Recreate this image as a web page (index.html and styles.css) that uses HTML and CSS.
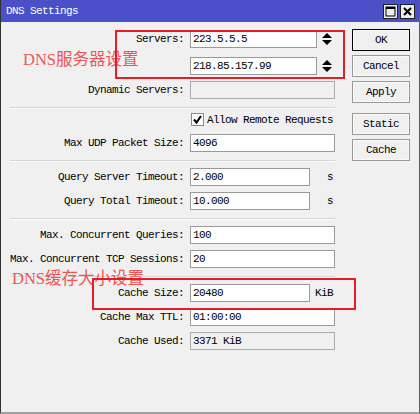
FILE: index.html
```html
<!DOCTYPE html>
<html>
<head>
<meta charset="utf-8">
<link rel="stylesheet" href="styles.css">
</head>
<body>
<div class="window">
  <div class="titlebar">
    <span class="title">DNS Settings</span>
    <div class="tb-btns">
      <span class="tb-btn"><svg width="13" height="13" viewBox="0 0 13 13"><rect x="2" y="2" width="9" height="9" fill="none" stroke="#000" stroke-width="1"/><rect x="2" y="2" width="9" height="2" fill="#000"/></svg></span>
      <span class="tb-btn"><svg width="13" height="13" viewBox="0 0 13 13"><path d="M3 3 L10 10 M10 3 L3 10" stroke="#000" stroke-width="2"/></svg></span>
    </div>
  </div>
  <div class="content">
    <div class="form">
      <div class="group">
        <div class="row"><span class="label">Servers:</span><span class="input w-srv">223.5.5.5</span><span class="spin"><svg width="10" height="14" viewBox="0 0 10 14"><polygon points="0,6 5,1 10,6" fill="#000"/><polygon points="0,8 5,13 10,8" fill="#000"/></svg></span></div>
        <div class="row r2"><span class="label"></span><span class="input w-srv">218.85.157.99</span><span class="spin"><svg width="10" height="14" viewBox="0 0 10 14"><polygon points="0,6 5,1 10,6" fill="#000"/><polygon points="0,8 5,13 10,8" fill="#000"/></svg></span></div>
        <div class="row"><span class="label">Dynamic Servers:</span><span class="input wide disabled"></span></div>
      </div>
      <div class="sep sep-first"></div>
      <div class="group">
        <div class="row cb-row"><span class="label"></span><span class="checkbox"><svg width="11" height="11" viewBox="0 0 11 11"><path d="M2 5.5 L4.5 8.5 L9 2" fill="none" stroke="#000" stroke-width="2"/></svg></span><span class="cb-label">Allow Remote Requests</span></div>
        <div class="row"><span class="label">Max UDP Packet Size:</span><span class="input wide">4096</span></div>
      </div>
      <div class="sep"></div>
      <div class="group">
        <div class="row"><span class="label">Query Server Timeout:</span><span class="input w-unit">2.000</span><span class="unit">s</span></div>
        <div class="row"><span class="label">Query Total Timeout:</span><span class="input w-unit">10.000</span><span class="unit">s</span></div>
      </div>
      <div class="sep"></div>
      <div class="group">
        <div class="row"><span class="label">Max. Concurrent Queries:</span><span class="input wide">100</span></div>
        <div class="row"><span class="label">Max. Concurrent TCP Sessions:</span><span class="input wide">20</span></div>
      </div>
      <div class="sep"></div>
      <div class="group">
        <div class="row"><span class="label">Cache Size:</span><span class="input w-unit">20480</span><span class="unit">KiB</span></div>
        <div class="row"><span class="label">Cache Max TTL:</span><span class="input wide">01:00:00</span></div>
        <div class="row"><span class="label">Cache Used:</span><span class="input wide disabled">3371 KiB</span></div>
      </div>
    </div>
    <div class="buttons">
      <span class="btn default">OK</span>
      <span class="btn">Cancel</span>
      <span class="btn">Apply</span>
      <span class="btn spaced">Static</span>
      <span class="btn">Cache</span>
    </div>
  </div>
  <div class="note note1">DNS服务器设置</div>
  <div class="note note2">DNS缓存大小设置</div>
  <div class="redbox box1"></div>
  <div class="redbox box2"></div>
</div>
</body>
</html>
```
FILE: styles.css
```css
html, body {
  margin: 0;
  padding: 0;
  background: #f0f0f0;
}
body {
  font-family: "Liberation Mono", "DejaVu Sans Mono", monospace;
  font-size: 11px;
  letter-spacing: -0.6px;
  color: #000;
}
.window {
  position: relative;
  width: 420px;
  height: 414px;
  box-sizing: border-box;
  background: #f0f0f0;
  border-left: 1px solid #303030;
  border-right: 1px solid #606060;
  border-bottom: 2px solid #a0a0a0;
}
.titlebar {
  height: 22px;
  background: #4b50c9;
  display: flex;
  align-items: center;
  padding-left: 5px;
  padding-right: 4px;
  box-sizing: border-box;
}
.title {
  color: #fff;
  line-height: 22px;
}
.tb-btns {
  margin-left: auto;
  display: flex;
  gap: 2px;
  margin-top: 1px;
}
.tb-btn {
  width: 15px;
  height: 15px;
  box-sizing: border-box;
  background: #ececec;
  border: 1px solid #202020;
  display: flex;
  align-items: center;
  justify-content: center;
}
.content {
  display: flex;
  padding-top: 7px;
}
.form {
  width: 344px;
  padding-top: 1px;
}
.group {
  display: flex;
  flex-direction: column;
  gap: 6px;
}
.row {
  display: flex;
  align-items: center;
  height: 18px;
}
.row.r2 {
  margin-top: 3px;
}
.row.cb-row {
  height: 17px;
}
.label {
  width: 183px;
  text-align: right;
  margin-right: 6px;
  flex: none;
  white-space: nowrap;
}
.input {
  height: 18px;
  box-sizing: border-box;
  border: 1px solid #9a9a9a;
  background: #fff;
  padding-left: 2px;
  line-height: 16px;
  flex: none;
  white-space: nowrap;
}
.input.wide { width: 145px; }
.input.w-srv { width: 127px; }
.input.w-unit { width: 120px; }
.input.disabled {
  background: #f0f0f0;
  border-color: #ababab;
}
.spin {
  display: flex;
  margin-left: 5px;
}
.unit {
  width: 23px;
  text-align: right;
}
.checkbox {
  width: 13px;
  height: 13px;
  box-sizing: border-box;
  border: 1px solid #8a8a8a;
  background: #fff;
  margin-left: 1px;
  display: flex;
  align-items: center;
  justify-content: center;
}
.cb-label {
  margin-left: 3px;
}
.sep {
  margin: 8px 0 6px 9px;
  width: 325px;
  height: 1px;
  background: #d6d6d6;
  border-bottom: 1px solid #fbfbfb;
}
.sep.sep-first {
  margin-bottom: 2px;
}
.buttons {
  margin-left: 7px;
  display: flex;
  flex-direction: column;
  gap: 4px;
}
.btn {
  width: 58px;
  height: 22px;
  box-sizing: border-box;
  border: 1px solid #9a9a9a;
  box-shadow: inset 0 0 0 1px #fafafa;
  display: flex;
  align-items: center;
  justify-content: center;
  background: #f0f0f0;
}
.btn.default {
  border-color: #000;
}
.btn.spaced {
  margin-top: 6px;
}
.note {
  position: absolute;
  font-family: "Liberation Serif", "Noto Sans CJK SC", serif;
  font-size: 16.5px;
  line-height: 17px;
  letter-spacing: 0;
  color: #ef5555;
  white-space: nowrap;
}
.note1 { left: 22px; top: 51px; }
.note2 { left: 11px; top: 270px; }
.redbox {
  position: absolute;
  border: 2px solid #e81c24;
  box-sizing: border-box;
}
.box1 { left: 114px; top: 30px; width: 230px; height: 49px; }
.box2 { left: 91px; top: 278px; width: 264px; height: 32px; }
```
